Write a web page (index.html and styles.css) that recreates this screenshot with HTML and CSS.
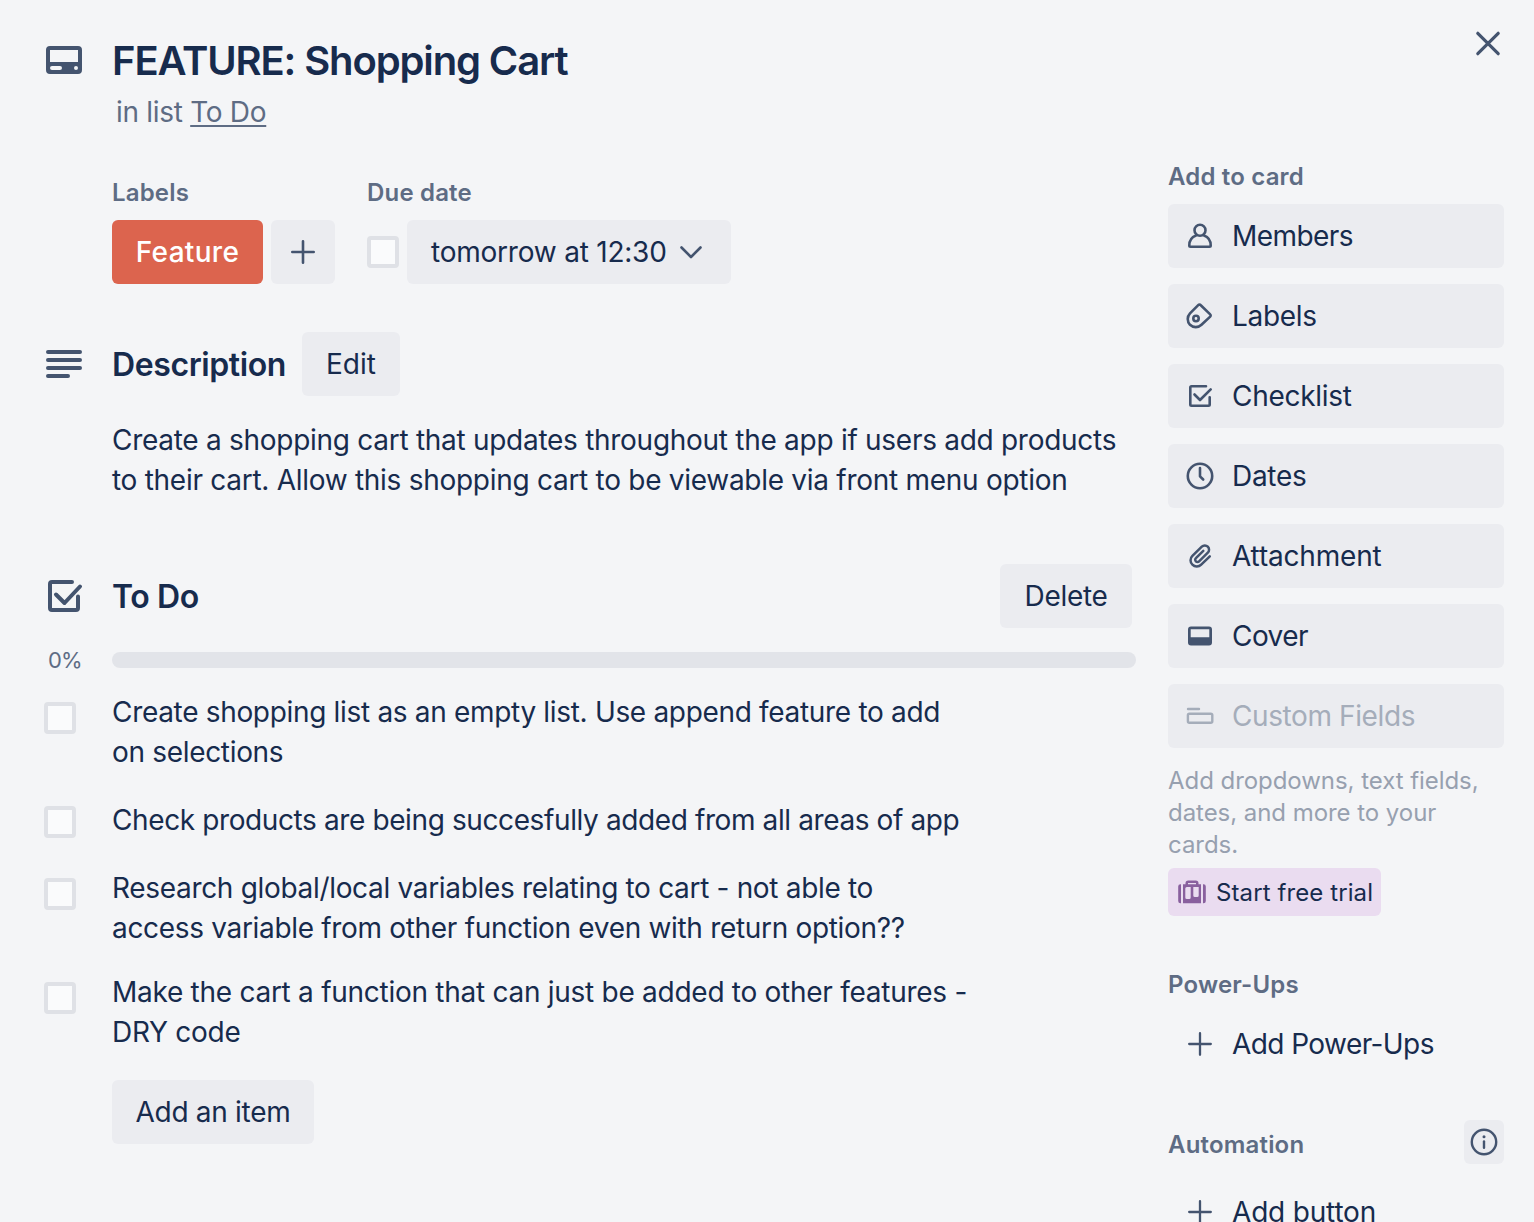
FILE: index.html
```
<!DOCTYPE html>
<html lang="en">
<head>
<meta charset="utf-8">
<title>FEATURE: Shopping Cart</title>
<link rel="stylesheet" href="styles.css">
</head>
<body>
<div class="card">
  <header class="card-header">
    <svg class="header-icon" width="40" height="32" viewBox="0 0 40 32"><path fill="currentColor" fill-rule="evenodd" d="M6 2h28a4 4 0 0 1 4 4v20a4 4 0 0 1-4 4H6a4 4 0 0 1-4-4V6a4 4 0 0 1 4-4zM6 6v12h28V6zM8 22a2 2 0 0 0 0 4h8a2 2 0 0 0 0-4zM32 22a2 2 0 1 0 0 4a2 2 0 0 0 0-4z"/></svg>
    <div class="heading">
      <h1 class="title">FEATURE: Shopping Cart</h1>
      <p class="subtitle">in list <a class="list-link">To Do</a></p>
    </div>
    <svg class="close" width="32" height="32" viewBox="0 0 32 32"><path class="line" stroke-width="3.2" d="M5.800 5.300l20.400 20.400M26.200 5.300L5.800 25.700"/></svg>
  </header>
  <div class="columns">
    <main class="main">
      <section class="meta">
        <div>
          <h3 class="caption">Labels</h3>
          <div class="meta-row">
            <span class="label">Feature</span>
            <span class="button square"><svg width="32" height="32" viewBox="0 0 32 32"><path class="line" stroke-width="2.6" d="M16 5.3v21.4M5.3 16h21.4"/></svg></span>
          </div>
        </div>
        <div>
          <h3 class="caption">Due date</h3>
          <div class="meta-row">
            <span class="checkbox"></span>
            <span class="button due"><span class="due-text">tomorrow at 12:30</span><svg width="32" height="32" viewBox="0 0 32 32"><path class="line" stroke-width="2.6" d="M6.5 11.5L16 21l9.500-9.500"/></svg></span>
          </div>
        </div>
      </section>

      <section>
        <div class="section-head">
          <svg class="section-icon" width="40" height="40" viewBox="0 0 40 40"><path class="line" stroke-width="4" d="M4 8h32M4 16h32M4 24h32M4 32h20"/></svg>
          <h2 class="section-title description-title">Description</h2>
          <span class="button edit">Edit</span>
        </div>
        <p class="description">Create a shopping cart that updates throughout the app if users add products<br>to their cart. Allow this shopping cart to be viewable via front menu option</p>
      </section>

      <section class="checklist">
        <div class="section-head">
          <svg class="section-icon" width="40" height="40" viewBox="0 0 40 40"><path class="line" stroke-width="4" d="M28 6H8a2 2 0 0 0-2 2v24a2 2 0 0 0 2 2h24a2 2 0 0 0 2-2V20.500M12 18.500l8.500 8.500L36 10.500"/></svg>
          <h2 class="section-title">To Do</h2>
          <span class="button delete">Delete</span>
        </div>
        <div class="progress"><span class="percent">0%</span><span class="bar"></span></div>
        <ul class="items">
          <li class="item"><span class="checkbox"></span><span>Create shopping list as an empty list. Use append feature to add<br>on selections</span></li>
          <li class="item single"><span class="checkbox"></span><span>Check products are being succesfully added from all areas of app</span></li>
          <li class="item"><span class="checkbox"></span><span>Research global/local variables relating to cart - not able to<br>access variable from other function even with return option??</span></li>
          <li class="item last"><span class="checkbox"></span><span>Make the cart a function that can just be added to other features -<br>DRY code</span></li>
        </ul>
        <span class="button add-item">Add an item</span>
      </section>
    </main>

    <aside class="sidebar">
      <h3 class="caption">Add to card</h3>
      <nav class="actions">
        <span class="button action tight"><svg width="32" height="32" viewBox="0 0 32 32"><g class="line" stroke-width="2.6"><circle cx="16" cy="10.200" r="5.500"/><path d="M12 15.500C8 17 5.300 20.500 5.300 25.500a1.200 1.200 0 0 0 1.200 1.200h19a1.200 1.200 0 0 0 1.200-1.200C26.700 20.500 24 17 20 15.500"/></g></svg>Members</span>
        <span class="button action"><svg width="32" height="32" viewBox="0 0 32 32"><g class="line" stroke-width="2.600"><path d="M14.200 5.200 6 13.400a8.300 8.300 0 0 0 0 11.400 8.300 8.300 0 0 0 11.500 0l8.700-8.200a1.500 1.500 0 0 0 0-2.200l-9.400-9.200a1.800 1.800 0 0 0-2.600 0z"/><circle cx="12" cy="18.500" r="2.700"/></g></svg>Labels</span>
        <span class="button action"><svg width="32" height="32" viewBox="0 0 32 32"><path class="line" stroke-width="2.600" d="M22 6.300H7.500a1.200 1.200 0 0 0-1.200 1.200v17a1.200 1.200 0 0 0 1.200 1.200h17a1.200 1.200 0 0 0 1.200-1.200v-7.200M10.500 14.500l5.500 5.500L26.700 9.300"/></svg>Checklist</span>
        <span class="button action"><svg width="32" height="32" viewBox="0 0 32 32"><g class="line" stroke-width="2.600"><circle cx="16" cy="16" r="12.200"/><path d="M16 8v8.300l3.200 3.200"/></g></svg>Dates</span>
        <span class="button action loose"><svg width="32" height="32" viewBox="0 0 32 32"><path class="line" stroke-width="2.500" d="M25.800 16.300l-8.600 8.400a6.100 6.100 0 0 1-8.800 0 6.100 6.100 0 0 1 0-8.800l9.400-9.200a4.200 4.200 0 0 1 6 0 4.200 4.200 0 0 1 0 6l-8.700 8.600a2.200 2.200 0 0 1-3.200 0 2.200 2.200 0 0 1 0-3.200l7.400-7.300"/></svg>Attachment</span>
        <span class="button action tight"><svg width="32" height="32" viewBox="0 0 32 32"><path fill="currentColor" fill-rule="evenodd" d="M7 6.500h18a3 3 0 0 1 3 3v13a3 3 0 0 1-3 3H7a3 3 0 0 1-3-3v-13a3 3 0 0 1 3-3zM6.700 9.200v8h18.600v-8z"/></svg>Cover</span>
        <span class="button action disabled"><svg width="32" height="32" viewBox="0 0 32 32"><g class="line" stroke-width="2.400"><path d="M4 9h11"/><rect x="3.900" y="13.700" width="24.400" height="9" rx="1.500"/></g></svg>Custom Fields</span>
      </nav>
      <p class="hint">Add dropdowns, text fields,<br>dates, and more to your<br>cards.</p>
      <span class="trial"><svg width="28" height="24" viewBox="0 0 28 24"><path fill="currentColor" fill-rule="evenodd" d="M2.500 4.300H3v19h-.500A2.300 2.300 0 0 1 .200 21V6.600a2.300 2.300 0 0 1 2.300-2.300zM5 4.300h2.500V3.200A2.700 2.700 0 0 1 10.200.500h7.600a2.700 2.700 0 0 1 2.700 2.700v1.100H23v19H5zM10 3v1.300h8V3zM8.800 7a1.500 1.500 0 0 0-1.500 1.500v9A1.500 1.500 0 0 0 8.800 19h2.400a1.500 1.500 0 0 0 1.500-1.500V7zM15.300 7v8.500a1.500 1.500 0 0 0 1.500 1.500h2.400a1.500 1.500 0 0 0 1.500-1.500V7zM25 4.300h.500a2.300 2.300 0 0 1 2.300 2.300V21a2.300 2.300 0 0 1-2.300 2.300H25z"/></svg><span class="trial-text">Start free trial</span></span>
      <h3 class="caption powerups">Power-Ups</h3>
      <span class="button action plain tight"><svg width="32" height="32" viewBox="0 0 32 32"><path class="line" stroke-width="2.300" d="M16 5.200v21.600M5.200 16h21.600"/></svg>Add Power-Ups</span>
      <div class="automation">
        <h3 class="caption">Automation</h3>
        <span class="info"><svg width="32" height="32" viewBox="0 0 32 32"><g class="line" stroke-width="2.400"><circle cx="16" cy="16" r="12.200"/><path d="M16 15.500v6.300"/></g><circle cx="16" cy="10.800" r="1.500" fill="currentColor"/></svg></span>
      </div>
      <span class="button action plain loose"><svg width="32" height="32" viewBox="0 0 32 32"><path class="line" stroke-width="2.300" d="M16 5.200v21.600M5.200 16h21.600"/></svg>Add button</span>
    </aside>
  </div>
</div>
</body>
</html>
```
FILE: styles.css
```
* { box-sizing: border-box; }

body {
  margin: 0;
  background: #f4f5f7;
  color: #172b4d;
  font: 400 28px/40px Inter, "Liberation Sans", sans-serif;
  letter-spacing: -0.3px;
}

h1, h2, h3, p, ul { margin: 0; padding: 0; }
svg { display: block; flex: none; color: #44546f; }

.line {
  fill: none;
  stroke: currentColor;
  stroke-linecap: round;
  stroke-linejoin: round;
}

.card {
  width: 1534px;
  height: 1222px;
  overflow: hidden;
  padding: 0 30px 0 44px;
  white-space: nowrap;
}

.card-header { display: flex; height: 160px; }
.header-icon { margin-top: 44px; }
.heading { flex: 1; margin-left: 28px; padding-top: 37px; }
.title { font-size: 40px; font-weight: 600; line-height: 48px; letter-spacing: -1.13px; }
.subtitle { margin: 7px 0 0 4px; color: #5e6c84; }
.list-link {
  text-decoration: underline;
  text-decoration-thickness: 2px;
  text-underline-offset: 3px;
}
.close { margin-top: 28px; }

.columns { display: flex; gap: 32px; }
.main { width: 1092px; }
.sidebar { width: 336px; }

.caption {
  padding-top: 1px;
  color: #5e6c84;
  font-size: 24px;
  font-weight: 600;
  line-height: 32px;
  letter-spacing: 0.18px;
}

.button {
  display: flex;
  align-items: center;
  justify-content: center;
  height: 64px;
  border-radius: 6px;
  background: #ebecf0;
}

.checkbox {
  flex: none;
  width: 32px;
  height: 32px;
  border: 4px solid #dfe1e6;
  border-radius: 4px;
  background: #fafbfc;
}

.meta { display: flex; gap: 32px; padding: 16px 0 0 68px; }
.meta-row { display: flex; align-items: center; gap: 8px; margin-top: 11px; }
.label {
  width: 151px;
  height: 64px;
  border-radius: 6px;
  background: #dc644e;
  color: #fff;
  font-weight: 500;
  line-height: 64px;
  letter-spacing: 0.3px;
  text-align: center;
}
.square { width: 64px; }
.due { width: 324px; justify-content: flex-start; padding-left: 24px; }
.due-text { width: 244px; letter-spacing: -0.22px; }

.section-head { display: flex; align-items: center; margin-top: 48px; }
.section-title {
  margin-left: 28px;
  padding-top: 2px;
  font-size: 32px;
  font-weight: 600;
  letter-spacing: -0.4px;
}
.description-title { width: 174px; }
.edit { width: 98px; margin-left: 16px; letter-spacing: 0; }
.description { margin: 24px 0 0 68px; letter-spacing: -0.28px; }

.checklist .section-head { margin-top: 64px; }
.delete { width: 132px; margin: 0 4px 0 auto; }

.progress { display: flex; align-items: center; height: 16px; margin-top: 24px; }
.percent {
  width: 68px;
  padding-left: 4px;
  color: #5e6c84;
  font-size: 22px;
  letter-spacing: -1px;
}
.bar { flex: 1; height: 16px; border-radius: 8px; background: #e2e4e9; }

.items { display: grid; gap: 28px; margin-top: 24px; list-style: none; letter-spacing: -0.32px; }
.item { display: flex; gap: 36px; }
.item .checkbox { margin-top: 10px; }
.item.single { letter-spacing: -0.39px; }
.item.single .checkbox { margin: 6px 0 2px; }
.item.last { margin-top: -4px; letter-spacing: -0.27px; }
.add-item { width: 202px; margin: 28px 0 0 68px; }

.actions { display: grid; gap: 16px; margin-top: 11px; }
.action { justify-content: flex-start; gap: 16px; padding-left: 16px; }
.tight { letter-spacing: -0.57px; }
.loose { letter-spacing: -0.18px; }
.disabled, .disabled svg { color: #a5adba; }
.disabled { letter-spacing: -0.4px; }
.plain { background: transparent; }
.hint {
  margin-top: 17px;
  color: #97a0af;
  font-size: 24px;
  line-height: 32px;
  letter-spacing: -0.05px;
}

.trial {
  display: flex;
  align-items: center;
  gap: 10px;
  width: 213px;
  height: 48px;
  margin-top: 7px;
  padding-left: 10px;
  border-radius: 6px;
  background: #eadcf0;
  font-size: 24px;
  letter-spacing: 0.1px;
}
.trial svg { color: #89609e; }
.trial-text { padding-top: 2px; }
.powerups { margin: 52px 0 11px; }
.automation { display: flex; justify-content: space-between; margin: 44px 0 16px; }
.automation .caption { padding-top: 9px; }
.info {
  display: flex;
  align-items: center;
  justify-content: center;
  width: 40px;
  height: 44px;
  border-radius: 6px;
  background: #ebecf0;
}
```
